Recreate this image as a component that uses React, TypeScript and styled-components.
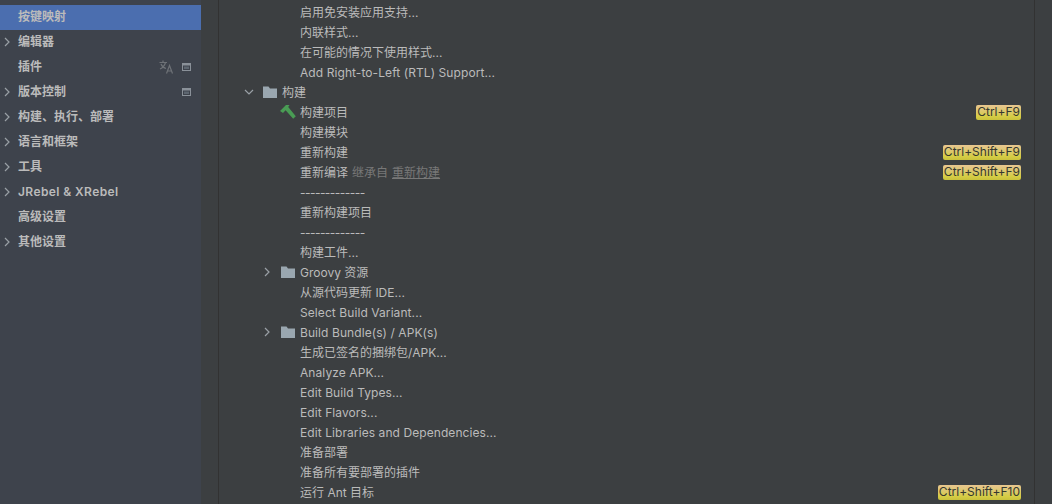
import { createGlobalStyle } from "styled-components";
import styled from "styled-components";

const GlobalStyle = createGlobalStyle`
	html, body {
		margin: 0;
		height: 100%;
		background: #3c3f41;
		overflow: hidden;
	}
	#root {
		height: 100%;
	}
`;

const fontStack = `Inter, "Noto Sans CJK SC", sans-serif`;

const Page = styled.div`
	display: flex;
	width: 1052px;
	height: 504px;
	overflow: hidden;
	font-family: ${fontStack};
	font-size: 12px;
`;

const Sidebar = styled.div`
	width: 201px;
	flex-shrink: 0;
	padding-top: 5px;
	background: #3e434c;
	box-sizing: border-box;
`;

const NavRow = styled.div<{ $selected?: boolean }>`
	display: flex;
	align-items: center;
	height: 25px;
	padding-right: 10px;
	padding-bottom: 1px;
	box-sizing: border-box;
	line-height: 20px;
	color: #bbbbbb;
	font-weight: 600;
	background: ${(props) => (props.$selected ? "#4b6eaf" : "transparent")};
`;

const NavArrow = styled.div`
	display: flex;
	align-items: center;
	width: 18px;
	padding-left: 2px;
	box-sizing: border-box;
	flex-shrink: 0;
`;

const NavLabel = styled.div<{ $spacing?: number }>`
	flex: 1;
	white-space: nowrap;
	letter-spacing: ${(props) => props.$spacing ?? 0}px;
`;

const NavIcons = styled.div`
	display: flex;
	align-items: center;
	gap: 8px;
`;

const Gutter = styled.div`
	width: 17px;
	flex-shrink: 0;
	background: #3c3f41;
	border-right: 1px solid #323232;
`;

const Tree = styled.div`
	flex: 1;
	padding-top: 2px;
	background: #3c3f41;
	min-width: 0;
`;

const TreeRow = styled.div<{ $depth: number }>`
	display: flex;
	align-items: center;
	height: 20px;
	line-height: 20px;
	padding-left: ${(props) => props.$depth}px;
	padding-right: 13px;
	color: #bbbbbb;
	white-space: nowrap;
`;

const Expander = styled.div`
	display: flex;
	justify-content: center;
	align-items: center;
	width: 18px;
	flex-shrink: 0;
`;

const RowIcon = styled.div<{ $inset: number }>`
	display: flex;
	align-items: center;
	width: 24px;
	padding-left: ${(props) => props.$inset}px;
	box-sizing: border-box;
	flex-shrink: 0;
`;

const RowLabel = styled.div<{ $spacing: number }>`
	flex: 1;
	padding-top: 2px;
	letter-spacing: ${(props) => props.$spacing}px;
`;

const Inherited = styled.span`
	color: #787878;
	margin-left: 4px;
`;

const InheritedLink = styled.span`
	color: #787878;
	margin-left: 4px;
	text-decoration: underline;
`;

const Shortcut = styled.div`
	height: 15px;
	padding: 0 1px;
	line-height: 14px;
	border-radius: 2px;
	color: #36382f;
	background: linear-gradient(#e8c690, #dcc96a 45%, #d6cd45 75%, #c9c23c);
`;

const ScrollTrack = styled.div`
	width: 17px;
	flex-shrink: 0;
	background: #3c3f41;
	border-left: 1px solid #323232;
`;

const Chevron = ({ open }: { open?: boolean }) => (
	<svg width="10" height="10" viewBox="0 0 10 10" fill="none">
		<path
			d={open ? "M1 3 L5 7 L9 3" : "M3 1 L7 5 L3 9"}
			stroke="#9aa0a6"
			strokeWidth="1.2"
		/>
	</svg>
);

const FolderIcon = () => (
	<svg width="14" height="12" viewBox="0 0 14 12">
		<path d="M0 0.5 H5.5 L7 2.5 H14 V12 H0 Z" fill="#9aa7b0" />
	</svg>
);

const HammerIcon = () => (
	<svg width="16" height="14" viewBox="0 0 16 14">
		<path
			d="M0 6 L6 0 L9.5 0 L8.2 2 L15.8 11.2 L13.2 13.8 L5.6 5.2 L3 8 Z"
			fill="#499c54"
		/>
	</svg>
);

const TranslateIcon = () => (
	<svg width="15" height="14" viewBox="0 0 15 14" fill="none" stroke="#6e7277" strokeWidth="1.2">
		<path d="M0.5 2.5 H8 M4 0.5 V2.5 M6.5 2.5 C5.5 6 3.5 8 1 9 M2 4 C3 6.5 5 8 7 8.5" />
		<path d="M7.5 13.5 L10.5 5.5 L13.5 13.5 M8.5 11 H12.5" />
	</svg>
);

const ProjectIcon = () => (
	<svg width="9" height="8" viewBox="0 0 9 8">
		<rect x="0.5" y="0.5" width="8" height="7" fill="none" stroke="#8a9199" />
		<rect x="0.5" y="0.5" width="8" height="2" fill="#8a9199" />
		<rect x="2" y="3.5" width="5" height="2.5" fill="#5d6670" />
	</svg>
);

type NavItem = {
	label: string;
	arrow?: boolean;
	selected?: boolean;
	translate?: boolean;
	project?: boolean;
	spacing?: number;
};

const navItems: NavItem[] = [
	{ label: "按键映射", selected: true },
	{ label: "编辑器", arrow: true },
	{ label: "插件", translate: true, project: true },
	{ label: "版本控制", arrow: true, project: true },
	{ label: "构建、执行、部署", arrow: true },
	{ label: "语言和框架", arrow: true },
	{ label: "工具", arrow: true },
	{ label: "JRebel & XRebel", arrow: true, spacing: 0.4 },
	{ label: "高级设置" },
	{ label: "其他设置", arrow: true },
];

type TreeItem = {
	label: string;
	top?: boolean;
	folder?: boolean;
	open?: boolean;
	hammer?: boolean;
	shortcut?: string;
	inherited?: string;
};

const treeItems: TreeItem[] = [
	{ label: "启用免安装应用支持..." },
	{ label: "内联样式..." },
	{ label: "在可能的情况下使用样式..." },
	{ label: "Add Right-to-Left (RTL) Support..." },
	{ label: "构建", top: true, folder: true, open: true },
	{ label: "构建项目", hammer: true, shortcut: "Ctrl+F9" },
	{ label: "构建模块" },
	{ label: "重新构建", shortcut: "Ctrl+Shift+F9" },
	{ label: "重新编译", inherited: "重新构建", shortcut: "Ctrl+Shift+F9" },
	{ label: "-------------" },
	{ label: "重新构建项目" },
	{ label: "-------------" },
	{ label: "构建工件..." },
	{ label: "Groovy 资源", folder: true },
	{ label: "从源代码更新 IDE..." },
	{ label: "Select Build Variant..." },
	{ label: "Build Bundle(s) / APK(s)", folder: true },
	{ label: "生成已签名的捆绑包/APK..." },
	{ label: "Analyze APK..." },
	{ label: "Edit Build Types..." },
	{ label: "Edit Flavors..." },
	{ label: "Edit Libraries and Dependencies..." },
	{ label: "准备部署" },
	{ label: "准备所有要部署的插件" },
	{ label: "运行 Ant 目标", shortcut: "Ctrl+Shift+F10" },
];

// separators and plain latin labels run a little tighter/wider than Inter's default
const labelSpacing = (label: string) => {
	if (/^-+$/.test(label)) return -0.55;
	if (/^[\x20-\x7e]+$/.test(label)) return 0.08;
	return 0;
};

export default function App() {
	return (
		<Page>
			<GlobalStyle />
			<Sidebar>
				{navItems.map((item) => (
					<NavRow key={item.label} $selected={item.selected}>
						<NavArrow>{item.arrow && <Chevron />}</NavArrow>
						<NavLabel $spacing={item.spacing}>{item.label}</NavLabel>
						<NavIcons>
							{item.translate && <TranslateIcon />}
							{item.project && <ProjectIcon />}
						</NavIcons>
					</NavRow>
				))}
			</Sidebar>
			<Gutter />
			<Tree>
				{treeItems.map((item, index) => (
					<TreeRow key={index} $depth={item.top ? 21 : 39}>
						<Expander>{item.folder && <Chevron open={item.open} />}</Expander>
						<RowIcon $inset={item.hammer ? 4 : 5}>
							{item.folder && <FolderIcon />}
							{item.hammer && <HammerIcon />}
						</RowIcon>
						<RowLabel $spacing={labelSpacing(item.label)}>
							{item.label}
							{item.inherited && (
								<>
									<Inherited>继承自</Inherited>
									<InheritedLink>{item.inherited}</InheritedLink>
								</>
							)}
						</RowLabel>
						{item.shortcut && <Shortcut>{item.shortcut}</Shortcut>}
					</TreeRow>
				))}
			</Tree>
			<ScrollTrack />
		</Page>
	);
}
